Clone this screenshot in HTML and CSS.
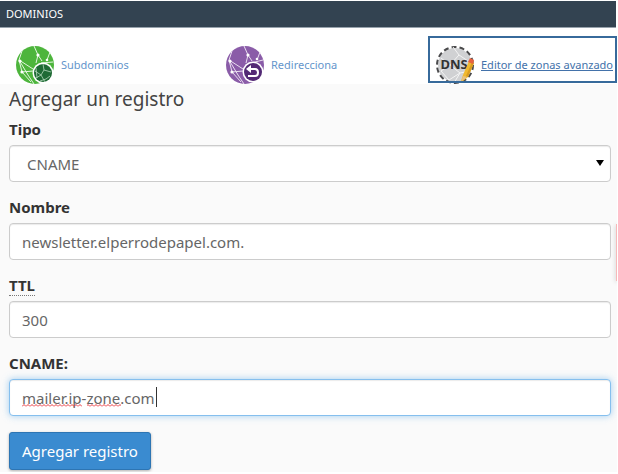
FILE: index.html
```html
<!DOCTYPE html>
<html lang="es">
<head>
  <meta charset="UTF-8" />
  <meta name="viewport" content="width=device-width, initial-scale=1.0"/>
  <title>Editor de zonas avanzado</title>
  <link rel="stylesheet" href="styles.css">
</head>
<body>
  <h2 class="panel-title">DOMINIOS</h2>

  <nav class="tools">
    <a class="tool" href="#">
      <svg class="icon" viewBox="0 0 38 38" aria-hidden="true">
        <circle cx="19" cy="19" r="19" fill="#4db53c"/>
        <g fill="none" stroke="#e3f5df" stroke-width="1">
          <path d="M18 0L22 9L20 17M22 9L26 15M31 14L34 6M25 17L37 16M3 14L17 23M6 5L3 14L6 26L17 25M6 26L15 36M3 14L12 29L18 38"/>
        </g>
        <g fill="#fff">
          <circle cx="22" cy="9" r="1.6"/><circle cx="4" cy="15" r="1.6"/>
          <circle cx="6" cy="26" r="1.6"/><circle cx="31" cy="14" r="1.3"/>
        </g>
        <circle cx="27" cy="27" r="10.5" fill="#fff"/>
        <circle cx="27" cy="27" r="9" fill="#1f6b35"/>
        <path d="M27 18L28 24L25 29L19 25M28 24L35 26M25 29L20 32M25 29L29 36M34 30L30 33L24 35M20 22L21 32" fill="none" stroke="#b5d8bd" stroke-width="0.8"/>
      </svg>
      <span>Subdominios</span>
    </a>
    <a class="tool" href="#">
      <svg class="icon" viewBox="0 0 38 38" aria-hidden="true">
        <circle cx="19" cy="19" r="19" fill="#8a5ca8"/>
        <g fill="none" stroke="#e9def0" stroke-width="1">
          <path d="M18 0L22 9L20 17M22 9L26 15M31 14L34 6M25 17L37 14M3 14L17 23M6 5L3 14L6 26L17 25M6 26L15 36M3 14L12 29L18 38"/>
        </g>
        <g fill="#fff">
          <circle cx="22" cy="9" r="1.6"/><circle cx="4" cy="15" r="1.6"/>
          <circle cx="6" cy="26" r="1.6"/><circle cx="31" cy="13" r="1.3"/>
        </g>
        <circle cx="27" cy="26" r="10.5" fill="#fff"/>
        <circle cx="27" cy="26" r="9" fill="#532a75"/>
        <path d="M23 23H29Q32 23 32 26.500Q32 30 29 30H22" fill="none" stroke="#fff" stroke-width="2"/>
        <path d="M20 23L25 19V27Z" fill="#fff"/>
      </svg>
      <span>Redirecciona</span>
    </a>
    <a class="tool tool-active" href="#">
      <svg class="icon" viewBox="0 0 38 38" aria-hidden="true">
        <circle cx="19" cy="19" r="18" fill="#d0d1d3" stroke="#fff" stroke-width="2"/>
        <circle cx="19" cy="19" r="18" fill="none" stroke="#4a4a4c" stroke-width="2" stroke-dasharray="5 3.080"/>
        <path d="M17 1L23 9L14 19L5 12M23 9L32 15M14 19L24 27L34 25M24 27L18 37M5 25L14 19M5 25L13 34L24 27" fill="none" stroke="#f4f4f4" stroke-width="1"/>
        <text class="icon-text" x="18" y="23">DNS</text>
        <path d="M25 35L27 29L33 15L38 17L32 31L26 36Z" fill="#f0b92f"/>
        <path d="M25 36L27 30L31 31Z" fill="#e6c184"/>
        <path d="M32 31L38 17L36 16L30 30Z" fill="#d99c20"/>
        <path d="M32 16L34 12L38 14L37 18Z" fill="#e8623f"/>
      </svg>
      <span>Editor de zonas avanzado</span>
    </a>
  </nav>

  <form class="record-form">
    <h3>Agregar un registro</h3>

    <div class="group">
      <label for="tipo">Tipo</label>
      <div class="field field-select">
        <select id="tipo">
          <option selected>CNAME</option>
          <option>A</option>
        </select>
      </div>
    </div>

    <div class="group">
      <label for="nombre">Nombre</label>
      <div class="field">
        <input type="text" id="nombre" value="newsletter.elperrodepapel.com." />
      </div>
    </div>

    <div class="group">
      <label for="ttl"><abbr>TTL</abbr></label>
      <div class="field">
        <input type="text" id="ttl" value="300" />
      </div>
    </div>

    <div class="group">
      <label for="cname">CNAME:</label>
      <div class="field">
        <input type="text" id="cname" class="focused" value="mailer.ip-zone.com" spellcheck="false" />
        <svg class="marks" width="140" height="24" aria-hidden="true">
          <defs>
            <pattern id="wave" width="4" height="3" patternUnits="userSpaceOnUse">
              <path d="M0 2.500L2 0.500L4 2.500" fill="none" stroke="#e8353b" stroke-width="1"/>
            </pattern>
          </defs>
          <rect x="0" y="18" width="60" height="3" fill="url(#wave)"/>
          <rect x="65" y="18" width="34" height="3" fill="url(#wave)"/>
          <rect x="134" y="1" width="1" height="20" fill="#333"/>
        </svg>
      </div>
    </div>

    <button type="submit">Agregar registro</button>
    <div class="side-tab"></div>
  </form>
</body>
</html>
```
FILE: styles.css
```css
* {
  box-sizing: border-box;
}
body {
  margin: 0;
  padding: 1px 1px 0 0;
  background: #fff;
  color: #333;
  font-family: "Noto Sans", "Open Sans", sans-serif;
  font-size: 15px;
  line-height: 24px;
}
.panel-title {
  margin: 0 1px 0 0;
  padding: 0 6px;
  background: #334351;
  border-bottom: 1px solid #97a2ac;
  color: #fff;
  font-size: 11px;
  font-weight: normal;
  line-height: 26px;
}

/* tool links */
.tools {
  display: grid;
  grid-template-columns: 1fr 202px 189px;
  height: 56px;
  padding: 8px 0 0 16px;
  overflow: hidden;
}
.tool {
  position: relative;
  display: flex;
  gap: 7px;
  height: 47px;
  padding-top: 10px;
  color: #6495cb;
  font-size: 11px;
  line-height: 38px;
  text-decoration: none;
  white-space: nowrap;
}
.icon {
  flex: none;
  width: 38px;
  height: 38px;
}
.icon-text {
  font-size: 13px;
  font-weight: bold;
  text-anchor: middle;
  fill: #333;
}
.tool-active {
  padding-left: 8px;
  color: #4372aa;
  text-decoration: underline;
}
.tool-active::after {
  content: "";
  position: absolute;
  inset: 0;
  border: 2px solid #376a9b;
}

/* record form */
.record-form {
  position: relative;
  padding: 0 6px 2px 9px;
  background: #fafafa;
  overflow: hidden;
}
h3 {
  margin: 0 0 3px;
  color: #444;
  font-size: 19px;
  font-weight: normal;
  line-height: 30px;
}
.group {
  margin-bottom: 13px;
}
label {
  display: block;
  margin-bottom: 4px;
  font-weight: bold;
}
abbr {
  display: inline-block;
  height: 23px;
  border-bottom: 1px dotted #777;
}
.field {
  position: relative;
}
input,
select {
  display: block;
  width: 100%;
  height: 37px;
  padding: 0 12px;
  background: #fff;
  border: 1px solid #ccc;
  border-radius: 4px;
  box-shadow: inset 0 1px 1px rgba(0, 0, 0, 0.08);
  color: #666;
  font-family: inherit;
  font-size: 15px;
  outline: none;
}
select {
  appearance: none;
  padding-left: 17px;
}
.field-select::after {
  content: "";
  position: absolute;
  top: 15px;
  right: 7px;
  border: 4px solid transparent;
  border-top: 6px solid #000;
  border-bottom: 0;
}
.focused {
  border-color: #85bfee;
  box-shadow: inset 0 1px 1px rgba(0, 0, 0, 0.08), 0 0 7px rgba(102, 175, 233, 0.6);
}
.marks {
  position: absolute;
  top: 7px;
  left: 13px;
}
button {
  display: block;
  height: 38px;
  margin-top: 16px;
  padding: 0 12px;
  background: #3a8bd0;
  border: 1px solid #2d75b3;
  border-radius: 3px;
  box-shadow: 0 1px 3px rgba(0, 0, 0, 0.3);
  color: #fff;
  font-family: inherit;
  font-size: 15px;
  cursor: pointer;
}
button:hover {
  background: #3079b8;
}
.side-tab {
  position: absolute;
  top: 140px;
  right: 0;
  width: 1px;
  height: 57px;
  background: #f7b9b9;
  box-shadow: 0 1px 4px rgba(0, 0, 0, 0.4);
}
```
